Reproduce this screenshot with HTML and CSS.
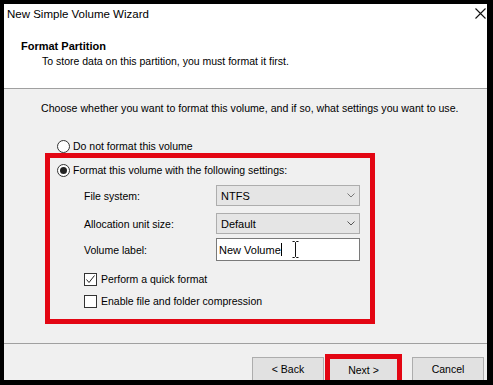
FILE: index.html
```html
<!DOCTYPE html>
<html>
<head>
<meta charset="utf-8">
<link rel="stylesheet" href="styles.css">
</head>
<body>
<div class="window">
  <div class="top">
    <div class="titlebar">
      <span class="title">New Simple Volume Wizard</span>
      <svg class="close" width="11" height="11" viewBox="0 0 11 11"><path d="M0.5 0.5L10.5 10.5M10.5 0.5L0.5 10.5" stroke="#111" stroke-width="1.1" fill="none"/></svg>
    </div>
    <div class="header">
      <div class="h1">Format Partition</div>
      <div class="sub">To store data on this partition, you must format it first.</div>
    </div>
  </div>
  <div class="content">
    <div class="intro">Choose whether you want to format this volume, and if so, what settings you want to use.</div>
    <div class="option first"><span class="radio"></span><span>Do not format this volume</span></div>
    <div class="group">
      <div class="option"><span class="radio on"></span><span>Format this volume with the following settings:</span></div>
      <div class="form">
        <div class="row r1">
          <div class="label">File system:</div>
          <div class="select"><span>NTFS</span><svg class="chev" width="8" height="5" viewBox="0 0 8 5"><path d="M0.5 0.5L4 4L7.5 0.5" stroke="#777" stroke-width="1" fill="none"/></svg></div>
        </div>
        <div class="row r2">
          <div class="label">Allocation unit size:</div>
          <div class="select"><span>Default</span><svg class="chev" width="8" height="5" viewBox="0 0 8 5"><path d="M0.5 0.5L4 4L7.5 0.5" stroke="#555" stroke-width="1" fill="none"/></svg></div>
        </div>
        <div class="row r3">
          <div class="label">Volume label:</div>
          <div class="textbox"><span>New Volume</span><span class="caret"></span>
            <svg class="ibeam" width="7" height="17" viewBox="0 0 7 17"><path d="M0.5 0.5H2.5L3.5 1.5L4.5 0.5H6.5M3.5 1.5V15.5M0.5 16.5H2.5L3.5 15.5L4.5 16.5H6.5" stroke="#111" stroke-width="1" fill="none"/></svg>
          </div>
        </div>
      </div>
      <div class="check c1"><span class="box"><svg width="11" height="11" viewBox="0 0 11 11"><path d="M1.5 5.5L4 8.5L9.5 1.5" stroke="#222" stroke-width="1" fill="none"/></svg></span><span>Perform a quick format</span></div>
      <div class="check c2"><span class="box"></span><span>Enable file and folder compression</span></div>
    </div>
  </div>
  <div class="footer">
    <div class="btn back">&lt; Back</div>
    <div class="btn next">Next &gt;</div>
    <div class="btn cancel">Cancel</div>
  </div>
</div>
</body>
</html>
```

FILE: styles.css
```css
html, body {
  margin: 0;
  padding: 0;
  background: #000;
}
body {
  font-family: "Liberation Sans", Arial, sans-serif;
  font-size: 10.5px;
  color: #000;
}
.window {
  margin: 4px 0 0 4px;
  width: 483px;
  height: 376px;
  overflow: hidden;
  background: #f0f0f0;
  display: flex;
  flex-direction: column;
}
.top {
  box-sizing: border-box;
  height: 85px;
  background: #fff;
  border-bottom: 1px solid #a0a0a0;
}
.titlebar {
  height: 20px;
  display: flex;
  align-items: flex-start;
  justify-content: space-between;
}
.title {
  font-size: 11.5px;
  line-height: 16px;
  padding: 2px 0 0 3px;
}
.close {
  margin: 4px 1px 0 0;
}
.header {
  padding: 15px 0 0 17px;
}
.h1 {
  font-weight: bold;
  font-size: 11px;
  line-height: 14px;
}
.sub {
  margin: 1px 0 0 21px;
  line-height: 14px;
}
.content {
  box-sizing: border-box;
  height: 255px;
  border-bottom: 1px solid #a0a0a0;
  padding: 12px 0 0 37px;
}
.intro {
  line-height: 14px;
  font-size: 10.6px;
}
.option {
  display: flex;
  align-items: center;
  gap: 3px;
  line-height: 14px;
}
.option.first {
  margin: 24px 0 0 16px;
}
.radio {
  box-sizing: border-box;
  width: 13px;
  height: 13px;
  border: 1px solid #333;
  border-radius: 50%;
  background: #fff;
  display: flex;
  align-items: center;
  justify-content: center;
}
.radio.on::after {
  content: "";
  width: 7px;
  height: 7px;
  border-radius: 50%;
  background: #222;
}
.group {
  box-sizing: border-box;
  width: 330px;
  margin-left: 4px;
  border: 5px solid #e30613;
  padding: 5px 0 11px 7px;
}
.form {
  margin: 8px 0 0 27px;
  display: flex;
  flex-direction: column;
}
.row {
  display: flex;
  align-items: center;
}
.r2 { margin-top: 7px; }
.r3 { margin-top: 4px; }
.label {
  width: 132px;
}
.select {
  box-sizing: border-box;
  width: 144px;
  height: 21px;
  background: #e5e5e5;
  border: 1px solid #adadad;
  display: flex;
  align-items: center;
  justify-content: space-between;
  padding: 0 4px 0 4px;
  font-size: 11px;
}
.textbox {
  box-sizing: border-box;
  width: 144px;
  height: 23px;
  background: #fff;
  border: 1px solid #7a7a7a;
  display: flex;
  align-items: center;
  padding-left: 2px;
  font-size: 11px;
  position: relative;
}
.caret {
  width: 1px;
  height: 13px;
  background: #000;
}
.ibeam {
  position: absolute;
  left: 75px;
  top: 2px;
}
.check {
  display: flex;
  align-items: center;
  gap: 4px;
  margin-left: 27px;
  line-height: 14px;
}
.c1 { margin-top: 11px; }
.c2 { margin-top: 8px; }
.box {
  box-sizing: border-box;
  width: 13px;
  height: 13px;
  border: 1px solid #333;
  background: #fff;
  display: flex;
}
.footer {
  flex: 1;
  display: flex;
  justify-content: flex-end;
  align-items: flex-start;
  padding: 0 3px 0 0;
  overflow: hidden;
}
.btn {
  box-sizing: border-box;
  width: 72px;
  height: 24px;
  margin-top: 13px;
  background: #e1e1e1;
  border: 1px solid #adadad;
  display: flex;
  align-items: center;
  justify-content: center;
  font-size: 10.5px;
}
.btn.next {
  width: 77px;
  height: 31px;
  margin: 10px 0 0 1px;
  border: 5px solid #e30613;
  padding-top: 1px;
}
.btn.cancel {
  margin-left: 10px;
}
```
